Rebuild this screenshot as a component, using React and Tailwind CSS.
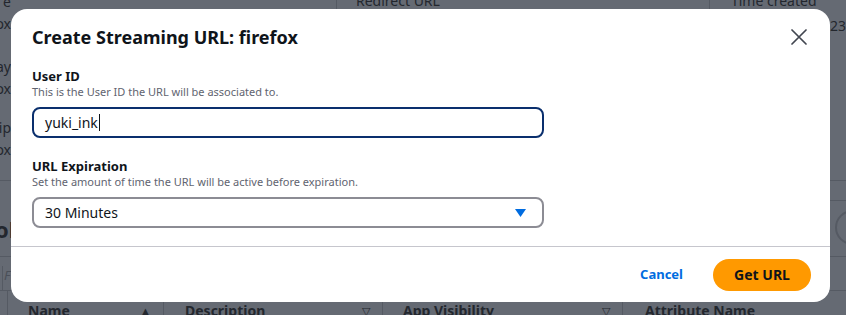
const font = { fontFamily: '"Noto Sans", "Open Sans", sans-serif' };

// dimmed console page sitting behind the modal
function BackdropPage() {
  return (
    <div className="h-[315px] w-[846px] overflow-hidden bg-[#656a73] text-[14px] text-[#23272e]">
      <div className="-mt-[10px] flex h-[191px] border-b border-[#555a63]">
        <div className="flex w-[11px] flex-col items-end leading-[22px]">
          <span className="mt-[1px]">e</span>
          <span>ox</span>
          <span className="mt-[21px]">ay</span>
          <span>ox</span>
          <span className="mt-[17px]">rip</span>
          <span>ox</span>
        </div>
        <div className="ml-[325px] flex h-[20px] w-[391px] items-end border-l border-[#555a63] pl-[19px] leading-[18px]">
          Redirect URL
        </div>
        <div className="flex flex-col">
          <div className="flex h-[20px] items-end border-l border-[#555a63] pl-[21px] leading-[18px]">
            Time created
          </div>
          <div className="mt-[5px] whitespace-nowrap pl-[105px] leading-[22px]">2023</div>
        </div>
      </div>
      <div className="flex h-[76px] justify-between border-b border-[#555a63]">
        <div className="-ml-[5px] mt-[33px] text-[22px] font-bold leading-[30px]">ol</div>
        <div className="flex w-[16px] flex-col">
          <div className="mt-[19px] h-px bg-[#555a63]" />
          <div className="ml-[5px] mt-[9px] h-[35px] w-[35px] shrink-0 rounded-full border-2 border-[#555a63]" />
        </div>
      </div>
      <div className="flex h-[34px] border-b border-[#555a63]">
        <div className="ml-[2px] mt-[9px] border-l border-[#555a63] pl-[1px] text-[13px] italic leading-[18px] text-[#4a4f58]">
          F
        </div>
      </div>
      <div className="flex h-[30px] items-end font-bold">
        <div className="ml-[7px] h-full w-px bg-[#555a63]" />
        <div className="flex w-[155px] justify-between pl-[20px] pr-[12px] leading-[20px]">
          <span>Name</span>
          <span className="text-[11px]">▲</span>
        </div>
        <div className="h-full w-px bg-[#555a63]" />
        <div className="flex w-[218px] justify-between pl-[21px] pr-[12px] leading-[20px]">
          <span>Description</span>
          <span className="text-[11px] font-normal">▽</span>
        </div>
        <div className="h-full w-px bg-[#555a63]" />
        <div className="flex w-[239px] justify-between pl-[20px] pr-[12px] leading-[20px]">
          <span>App Visibility</span>
          <span className="text-[11px] font-normal">▽</span>
        </div>
        <div className="h-full w-px bg-[#555a63]" />
        <div className="pl-[22px] leading-[20px]">Attribute Name</div>
      </div>
    </div>
  );
}

function Field({ label, hint, children }) {
  return (
    <div className="flex flex-col">
      <label className="text-[13px] font-bold leading-[16px] text-[#0f141a]">{label}</label>
      <p className="mt-[1px] text-[11px] leading-[14px] text-[#5f6470]">{hint}</p>
      <div className="mt-[8px]">{children}</div>
    </div>
  );
}

export default function App() {
  return (
    <div className="relative h-[315px] w-[846px] overflow-hidden" style={font}>
      <BackdropPage />
      <div className="absolute left-[11px] top-[9px] flex h-[293px] w-[819px] flex-col rounded-[16px] bg-white">
        <div className="flex items-center justify-between pl-[21px] pr-[23px] pt-[16px]">
          <h2 className="text-[18px] font-bold leading-[24px] text-[#0f141a]">
            Create Streaming URL: firefox
          </h2>
          <button type="button" aria-label="Close">
            <svg width="16" height="16" viewBox="0 0 16 16" fill="none" stroke="#424650" strokeWidth="1.7" strokeLinecap="round">
              <path d="M1 1 L15 15 M15 1 L1 15" />
            </svg>
          </button>
        </div>
        <div className="flex w-[533px] flex-col gap-[20px] pl-[21px] pt-[19px]">
          <Field label="User ID" hint="This is the User ID the URL will be associated to.">
            <div className="flex h-[31px] items-center rounded-[8px] border-2 border-[#0a2f6d] px-[11px] text-[14px] text-[#0f141a]">
              yuki_ink<span className="ml-px h-[17px] w-px bg-[#0f141a]" />
            </div>
          </Field>
          <Field label="URL Expiration" hint="Set the amount of time the URL will be active before expiration.">
            <div className="flex h-[31px] items-center justify-between rounded-[8px] border-2 border-[#8c8c94] pl-[11px] pr-[16px] text-[14px] text-[#0f141a]">
              <span>30 Minutes</span>
              <svg width="11" height="8" viewBox="0 0 11 8">
                <path d="M0 0 H11 L5.5 8 Z" fill="#006ce0" />
              </svg>
            </div>
          </Field>
        </div>
        <div className="mt-[18px] h-px bg-[#c6c6cd]" />
        <div className="flex flex-1 items-center justify-end gap-[30px] pr-[19px]">
          <button type="button" className="text-[13px] font-bold text-[#006ce0]">
            Cancel
          </button>
          <button
            type="button"
            className="h-[32px] w-[98px] rounded-full bg-[#ff9900] text-[14px] font-bold text-[#0f141a]"
          >
            Get URL
          </button>
        </div>
      </div>
    </div>
  );
}
